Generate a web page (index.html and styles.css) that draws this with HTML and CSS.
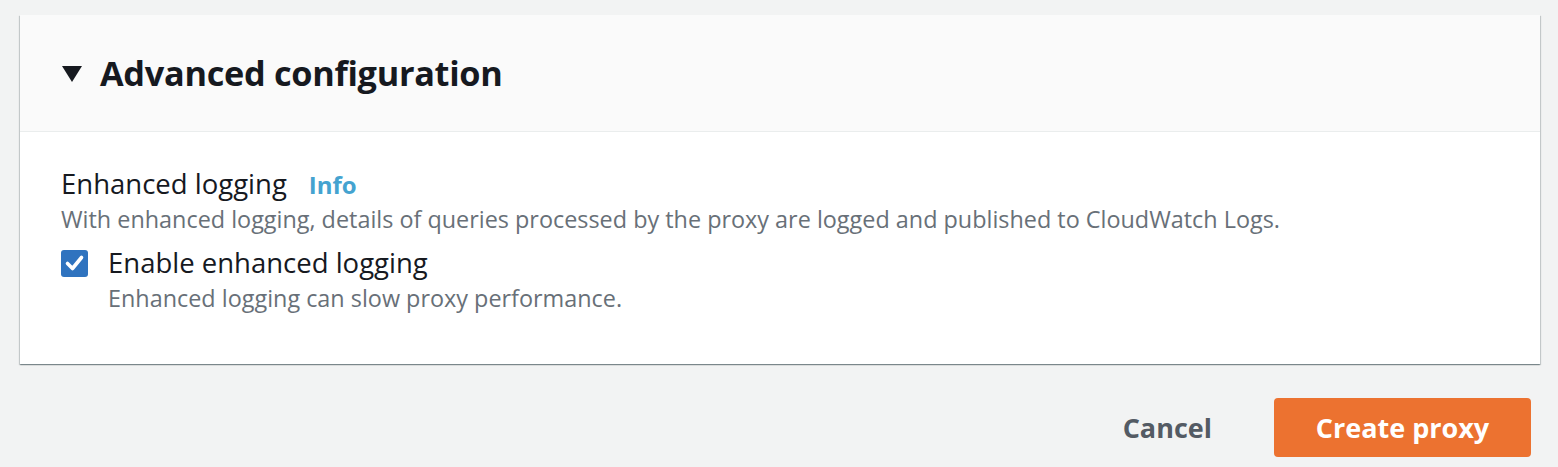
FILE: index.html
```html
<!DOCTYPE html>
<html>
<head>
<meta charset="utf-8">
<link rel="stylesheet" href="styles.css">
</head>
<body>
<div class="page">
  <section class="card">
    <header class="card-header">
      <span class="caret"></span>
      <h2 class="title">Advanced configuration</h2>
    </header>
    <div class="card-body">
      <div class="label-row">
        <span class="label">Enhanced logging</span>
        <a class="info">Info</a>
      </div>
      <p class="desc">With enhanced logging, details of queries processed by the proxy are logged and published to CloudWatch Logs.</p>
      <div class="check-row">
        <span class="checkbox">
          <svg width="27" height="27" viewBox="0 0 27 27"><rect x="0" y="0" width="27" height="27" rx="3" fill="#2f73bf"/><path d="M6.5 13.5 L11.5 18.5 L20.5 7.5" fill="none" stroke="#fff" stroke-width="3.6" stroke-linecap="round" stroke-linejoin="round"/></svg>
        </span>
        <div class="check-text">
          <div class="check-label">Enable enhanced logging</div>
          <div class="check-desc">Enhanced logging can slow proxy performance.</div>
        </div>
      </div>
    </div>
  </section>
  <div class="actions">
    <button class="btn-link">Cancel</button>
    <button class="btn-primary">Create proxy</button>
  </div>
</div>
</body>
</html>
```
FILE: styles.css
```css
html, body {
  margin: 0;
  padding: 0;
  background: #f2f3f3;
}
body {
  font-family: "Open Sans", "Noto Sans", sans-serif;
  color: #16191f;
}
.page {
  padding: 15px 18px 0 20px;
}
.card {
  background: #fff;
  box-shadow: 0 1px 1px 0 rgba(0, 28, 36, 0.3), 1px 1px 1px 0 rgba(0, 28, 36, 0.15), -1px 1px 1px 0 rgba(0, 28, 36, 0.15);
}
.card-header {
  height: 117px;
  box-sizing: border-box;
  background: #fafafa;
  border-bottom: 1px solid #eaeded;
  display: flex;
  align-items: center;
  padding-left: 42px;
}
.caret {
  width: 0;
  height: 0;
  border-left: 10px solid transparent;
  border-right: 10px solid transparent;
  border-top: 16px solid #16191f;
  margin-right: 18px;
  margin-top: 2px;
}
.title {
  margin: 0;
  font-size: 34.3px;
  font-weight: 700;
  line-height: 40px;
  letter-spacing: -0.3px;
}
.card-body {
  padding: 34px 41px 0 41px;
  height: 232px;
  box-sizing: border-box;
}
.label-row {
  display: flex;
  align-items: baseline;
  gap: 22px;
}
.label {
  font-size: 27.5px;
  line-height: 36px;
}
.info {
  font-size: 24px;
  font-weight: 700;
  color: #44a3d0;
}
.desc {
  margin: 0;
  font-size: 23.4px;
  line-height: 34px;
  color: #687078;
}
.check-row {
  display: flex;
  align-items: flex-start;
  gap: 20px;
  margin-top: 10px;
}
.checkbox {
  display: block;
  width: 27px;
  height: 27px;
  margin-top: 4px;
}
.checkbox svg {
  display: block;
}
.check-label {
  font-size: 27.5px;
  line-height: 34px;
}
.check-desc {
  font-size: 23.4px;
  line-height: 36px;
  color: #687078;
}
.actions {
  display: flex;
  justify-content: flex-end;
  align-items: center;
  padding-top: 34px;
  padding-right: 9px;
  gap: 62px;
}
.btn-link {
  background: none;
  border: none;
  padding: 0;
  font-family: inherit;
  font-size: 27px;
  font-weight: 700;
  color: #545b64;
}
.btn-primary {
  width: 257px;
  height: 59px;
  border: none;
  border-radius: 4px;
  background: #ec7230;
  color: #fff;
  font-family: inherit;
  font-size: 27px;
  font-weight: 700;
}
```
